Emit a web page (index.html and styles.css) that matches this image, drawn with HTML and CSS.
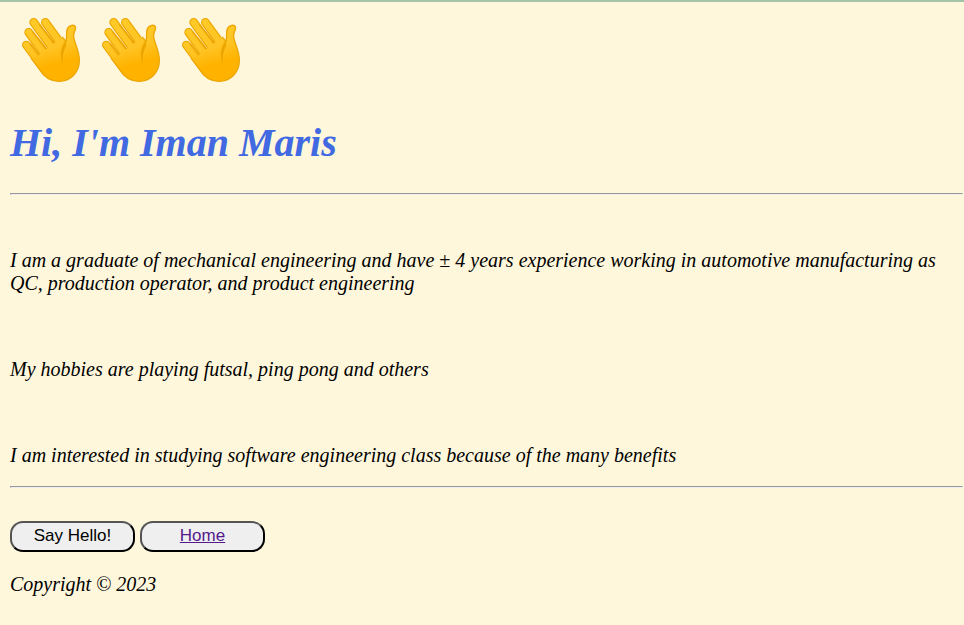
FILE: index.html
```html
<!DOCTYPE html>
<html lang="en">
<head>
  <meta charset="utf-8">
  <title>Iman Maris</title>
  <link rel="stylesheet" href="styles.css">
</head>
<body>
  <svg width="0" height="0" class="defs" aria-hidden="true">
    <defs>
      <linearGradient id="skin" gradientUnits="userSpaceOnUse" x1="125" y1="65" x2="170" y2="225">
        <stop offset="0" stop-color="#ffca28"/>
        <stop offset=".5" stop-color="#ffc424"/>
        <stop offset=".8" stop-color="#ffb300"/>
      </linearGradient>
      <symbol id="wave" viewBox="30 30 240 240">
        <g fill="none" stroke-linecap="round">
          <path stroke="#eda600" stroke-width="26" d="M79 135L118 187M86 97L132 160M101 67L148 132M136 67L182 130"/>
        </g>
        <path fill="url(#skin)" d="M95 178L119 210C132 231 150 244 177 244C213 244 238 217 238 181C238 148 219 124 221 104C222 94 229 88 226 80C221 72 204 76 201 90C199 99 201 110 198 127L187 112L160 129L138 146L115 164Z"/>
        <path fill="none" stroke="#eda600" stroke-width="4" stroke-linecap="round" stroke-linejoin="round" d="M94 175L119 209C132 231 150 244 177 244C213 244 238 217 238 181C238 148 219 124 221 104C222 94 229 88 226 80C221 72 204 76 201 90C199 99 201 110 198 125L188 112"/>
        <g fill="none" stroke="url(#skin)" stroke-width="19" stroke-linecap="round">
          <path d="M79 135L118 187M86 97L132 160M101 67L148 132M136 67L182 130"/>
        </g>
        <path fill="none" stroke="#eda600" stroke-width="5" stroke-linecap="round" stroke-linejoin="round" d="M91 132L116 164M99 97L139 146M119 75L162 128"/>
        <path fill="#eda600" d="M197 122C181 139 178 168 188 193C188 174 188 155 199 137Z"/>
      </symbol>
    </defs>
  </svg>

  <header>
    <div class="waves" role="img" aria-label="Waving hands">
      <svg class="wave"><use href="#wave"/></svg>
      <svg class="wave"><use href="#wave"/></svg>
      <svg class="wave"><use href="#wave"/></svg>
    </div>
    <h1>Hi, I'm Iman Maris</h1>
  </header>
  <hr>
  <main>
    <p>I am a graduate of mechanical engineering and have ± 4 years experience working in automotive manufacturing as QC, production operator, and product engineering</p>
    <p>My hobbies are playing futsal, ping pong and others</p>
    <p>I am interested in studying software engineering class because of the many benefits</p>
  </main>
  <hr>
  <div class="actions">
    <button class="btn" type="button">Say Hello!</button>
    <a class="btn link" href="#">Home</a>
  </div>
  <footer>Copyright © 2023</footer>
</body>
</html>
```
FILE: styles.css
```css
body {
  margin: 0;
  padding: 8px 1px 10px 10px;
  border-top: 2px solid #a3c4a8;
  background: #fff7dc;
  color: #000;
  font: italic 20px/23px "Liberation Serif", "Times New Roman", serif;
}

.defs {
  position: absolute;
}

.waves {
  display: flex;
}

.wave {
  width: 80px;
  height: 80px;
}

h1 {
  margin: 30px 0 28px;
  color: royalblue;
  font-size: 40px;
  line-height: 45px;
}

hr {
  height: 0;
  margin: 0;
  border: 1px solid;
  border-color: #999 #eee #eee #999;
}

main {
  display: grid;
  gap: 63px;
  padding: 54px 0 19px;
}

p {
  margin: 0;
}

.actions {
  display: flex;
  gap: 5px;
  margin: 33px 0 21px;
}

.btn {
  box-sizing: border-box;
  width: 125px;
  height: 31px;
  padding: 0 0 1px;
  border: 2px outset #000;
  border-radius: 13px;
  background: #efefef;
  color: #000;
  font: 17px/26px "Liberation Sans", Arial, sans-serif;
  text-align: center;
}

.link {
  color: #551a8b;
}
```
